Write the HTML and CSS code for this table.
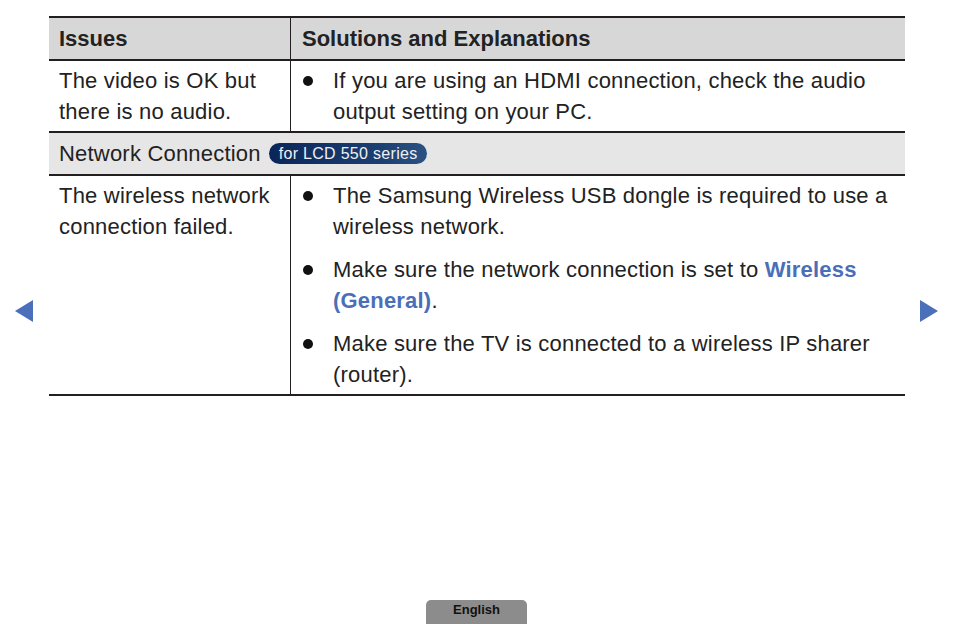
FILE: index.html
```html
<!DOCTYPE html>
<html>
<head>
<meta charset="utf-8">
<link rel="stylesheet" href="styles.css">
</head>
<body>
<div class="page">
  <div class="table">
    <div class="row head">
      <div class="cell c1">Issues</div>
      <div class="cell c2">Solutions and Explanations</div>
    </div>
    <div class="row">
      <div class="cell c1">The video is OK but there is no audio.</div>
      <div class="cell c2">
        <ul class="list">
          <li>If you are using an HDMI connection, check the audio output setting on your PC.</li>
        </ul>
      </div>
    </div>
    <div class="row section">
      <div class="cell full">Network Connection <span class="badge">for LCD 550 series</span></div>
    </div>
    <div class="row">
      <div class="cell c1">The wireless network connection failed.</div>
      <div class="cell c2">
        <ul class="list">
          <li>The Samsung Wireless USB dongle is required to use a wireless network.</li>
          <li>Make sure the network connection is set to <b class="link">Wireless (General)</b>.</li>
          <li>Make sure the TV is connected to a wireless IP sharer (router).</li>
        </ul>
      </div>
    </div>
  </div>
  <div class="nav prev"></div>
  <div class="nav next"></div>
  <div class="lang">English</div>
</div>
</body>
</html>
```
FILE: styles.css
```css
html, body {
  margin: 0;
  padding: 0;
  background: #fff;
}
body {
  font-family: "Liberation Sans", Arial, sans-serif;
  color: #222;
}
.page {
  position: relative;
  width: 954px;
  height: 624px;
  overflow: hidden;
  padding-top: 16px;
  box-sizing: border-box;
}
.table {
  margin-left: 49px;
  width: 856px;
  border-top: 2px solid #231f20;
}
.row {
  display: grid;
  grid-template-columns: 242px 1fr;
  border-bottom: 2px solid #231f20;
}
.cell {
  font-size: 22px;
  line-height: 31px;
  letter-spacing: 0.2px;
}
.c1 {
  padding: 4px 10px 4px 10px;
  border-right: 1px solid #231f20;
}
.c2 {
  padding: 4px 10px 4px 12px;
}
.head {
  background: #d7d7d7;
  height: 41px;
}
.head .cell {
  font-weight: bold;
  font-size: 22px;
  letter-spacing: 0;
  padding-top: 5px;
  padding-bottom: 5px;
  line-height: 31px;
}
.head .c2 {
  padding-left: 11px;
}
.section {
  background: #e6e6e6;
  display: flex;
  align-items: center;
  height: 41px;
}
.full {
  padding: 0 10px;
  display: flex;
  align-items: center;
  gap: 8px;
}
.badge {
  display: inline-block;
  background: linear-gradient(90deg, #0a2659 0%, #1c3f72 70%, #2b5283 100%);
  color: #f0f0f0;
  font-size: 16px;
  line-height: 21px;
  padding: 0 9px 0 10px;
  border-radius: 11px;
  letter-spacing: 0.3px;
}
.list {
  list-style: none;
  margin: 0;
  padding: 0;
}
.list li {
  position: relative;
  padding-left: 30px;
  margin-bottom: 12px;
}
.list li:last-child {
  margin-bottom: 0;
}
.list li::before {
  content: "";
  position: absolute;
  left: 0;
  top: 11px;
  width: 10px;
  height: 10px;
  border-radius: 50%;
  background: #111;
}
.link {
  color: #4a6fb8;
  font-weight: bold;
}
.nav {
  position: absolute;
  top: 300px;
  width: 0;
  height: 0;
  border-top: 11px solid transparent;
  border-bottom: 11px solid transparent;
}
.prev {
  left: 15px;
  border-right: 18px solid #4b6fba;
}
.next {
  left: 920px;
  border-left: 18px solid #4b6fba;
}
.lang {
  position: absolute;
  left: 426px;
  bottom: 0;
  width: 101px;
  height: 24px;
  background: #8c8c8c;
  border-radius: 5px 5px 0 0;
  text-align: center;
  font-size: 13px;
  font-weight: bold;
  line-height: 20px;
  color: #111;
}
```
